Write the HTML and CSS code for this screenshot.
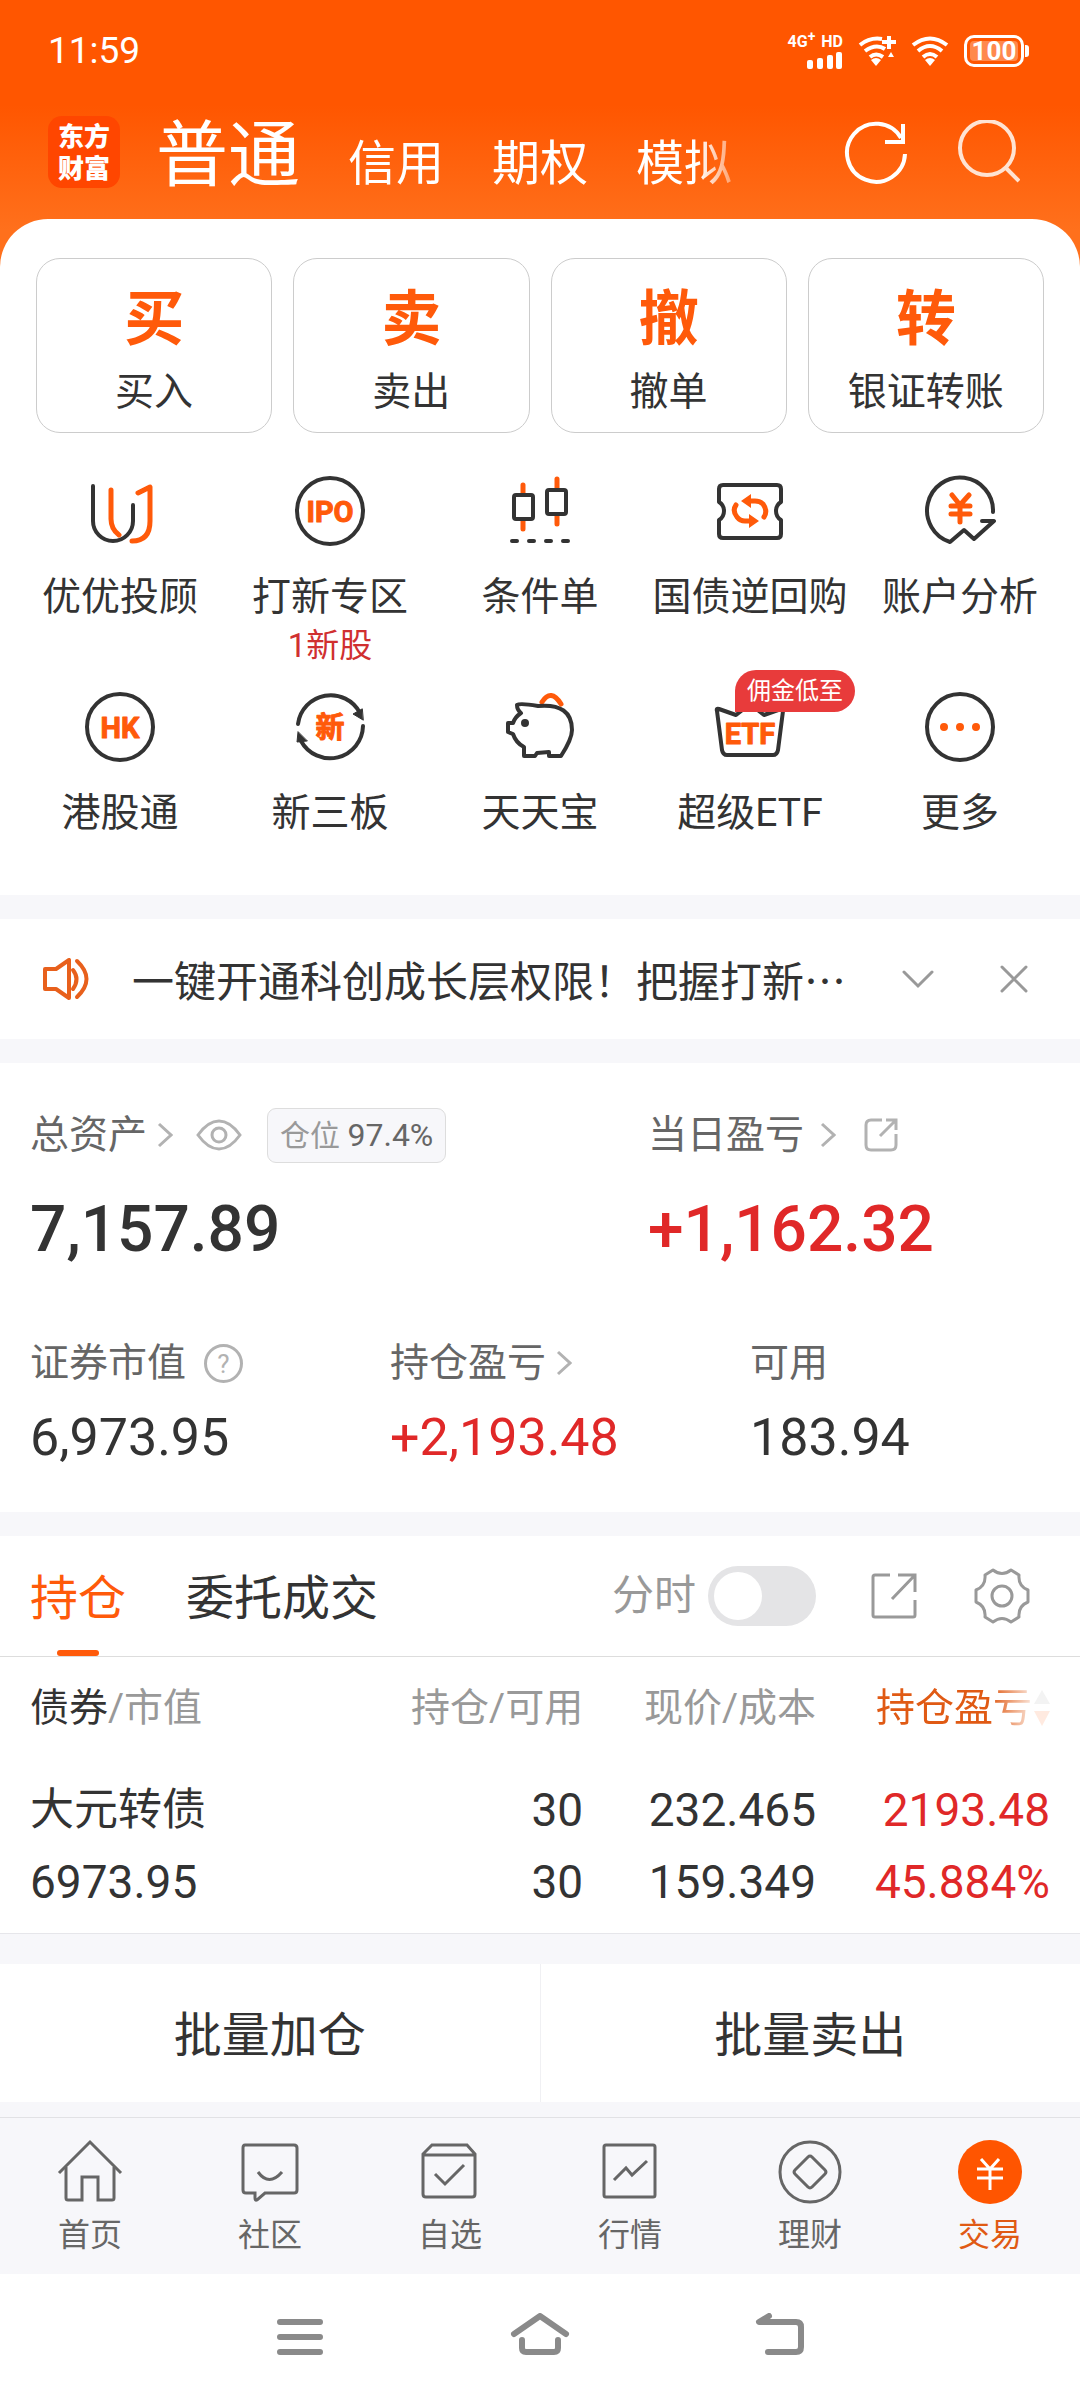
FILE: index.html
```html
<!DOCTYPE html>
<html lang="zh-CN">
<head>
  <meta charset="UTF-8" />
  <meta name="viewport" content="width=device-width, initial-scale=1.0" />
  <title>东方财富 - 交易</title>
  <link rel="stylesheet" href="styles.css">
</head>
<body>
  <div class="top">
    <div class="status-bar">
      <span class="time">11:59</span>
      <div class="signal">
        <div class="signal-text"><span>4G<sup>+</sup></span><span>HD</span></div>
        <svg width="36" height="17" viewBox="0 0 36 17" fill="#fff">
          <rect x="0" y="8" width="6" height="9" rx="2" />
          <rect x="10" y="6" width="6" height="11" rx="2" />
          <rect x="20" y="3" width="6" height="14" rx="2" />
          <rect x="29" y="0" width="6" height="17" rx="2" />
        </svg>
      </div>
      <svg width="38" height="32" viewBox="0 0 38 32" fill="none" stroke="#fff" stroke-width="4">
        <path d="M2 10Q12 2 24 4M7 16Q18 8 27 14M12 22Q18 17 25 22" />
        <path d="M31 1V14M24 7H38" />
        <path d="M13 25Q18 21 23 25L18 31Z" fill="#fff" stroke="none" />
        <path d="M30 22L33 17L36 22Z" fill="#fff" stroke="none" />
      </svg>
      <svg width="38" height="32" viewBox="0 0 38 32" fill="none" stroke="#fff" stroke-width="4">
        <path d="M2 10Q19 -3 36 10M7 16Q19 6 31 16M12 22Q19 16 26 22" />
        <path d="M14 25Q19 21 24 25L19 31Z" fill="#fff" stroke="none" />
      </svg>
      <div class="battery"><span>100</span></div>
    </div>

    <header class="title-bar">
      <div class="logo"><span>东方</span><span>财富</span></div>
      <nav class="account-tabs">
        <button class="active">普通</button>
        <button>信用</button>
        <button>期权</button>
        <button>模拟</button>
      </nav>
      <button class="icon-btn" aria-label="刷新">
        <svg width="64" height="64" viewBox="0 0 64 64" fill="none" stroke="#fff" stroke-width="4">
          <path d="M61 34A29 29 0 1 1 57 18" />
          <path d="M59 4V22H41" />
        </svg>
      </button>
      <button class="icon-btn" aria-label="搜索">
        <svg width="64" height="64" viewBox="0 0 64 64" fill="none" stroke="#ffe3d2" stroke-width="4">
          <circle cx="31" cy="28" r="27" />
          <path d="M49 47L63 61" />
        </svg>
      </button>
    </header>

    <section class="panel">
      <div class="actions">
        <button><b>买</b>买入</button>
        <button><b>卖</b>卖出</button>
        <button><b>撤</b>撤单</button>
        <button><b>转</b>银证转账</button>
      </div>

      <div class="services">
        <a href="#">
          <svg class="service-icon" viewBox="0 0 80 80">
            <path d="M13 15V50a20 20 0 0 0 40 0V34" />
            <path class="accent" d="M31 19V48Q31 58 39 64M58 22L70 16V50Q70 70 52 70" />
          </svg>
          优优投顾
        </a>
        <a href="#">
          <svg class="service-icon" viewBox="0 0 80 80">
            <circle cx="40" cy="40" r="33" />
            <text x="40" y="51">IPO</text>
          </svg>
          打新专区
          <small>1新股</small>
        </a>
        <a href="#">
          <svg class="service-icon" viewBox="0 0 80 80">
            <path class="accent" d="M23 14V22M23 50V58M57 8V17M57 44V53" />
            <rect x="14" y="24" width="19" height="24" rx="2" />
            <rect x="47" y="19" width="19" height="24" rx="2" />
            <path d="M12 70H17M29 70H34M46 70H51M63 70H68" />
          </svg>
          条件单
        </a>
        <a href="#">
          <svg class="service-icon" viewBox="0 0 80 80">
            <path d="M13 14H67Q71 14 71 18V31Q66 34 66 40T71 49V63Q71 67 67 67H13Q9 67 9 63V49Q14 46 14 40T9 31V18Q9 14 13 14Z" />
            <path class="accent" d="M54 46Q58 40 53 33Q50 30 45 30H40M26 34Q22 40 27 46Q30 50 35 50H40" />
            <path class="fill" d="M31 30L41 23V37ZM49 50L39 43V57Z" />
          </svg>
          国债逆回购
        </a>
        <a href="#">
          <svg class="service-icon" viewBox="0 0 80 80">
            <path d="M73 41A33 33 0 1 0 30 71L44 59L54 68L74 50H62" />
            <path class="accent" d="M32 24L40 34L49 24M40 34V51M31 35H50M31 43H50" />
          </svg>
          账户分析
        </a>
        <a href="#">
          <svg class="service-icon" viewBox="0 0 80 80">
            <circle cx="40" cy="40" r="33" />
            <text x="40" y="51">HK</text>
          </svg>
          港股通
        </a>
        <a href="#">
          <svg class="service-icon" viewBox="0 0 80 80">
            <path d="M8 37A33 33 0 0 1 70 26M73 39A33 33 0 0 1 11 54" />
            <path class="arrow" d="M73 33L63 27L72 22ZM8 45L7 55L17 54Z" />
            <text x="40" y="51">新</text>
          </svg>
          新三板
        </a>
        <a href="#">
          <svg class="service-icon" viewBox="0 0 80 80">
            <path class="accent" d="M42 15Q51 1 61 17" />
            <path d="M17 18Q20 16 38 19Q72 16 72 43Q72 52 61 69H49V65L37 66L35 69H24V60Q16 56 13 47L8 45V36H13Q15 30 21 26Q17 23 17 18Z" />
            <circle class="dark" cx="25" cy="36" r="2" />
          </svg>
          天天宝
        </a>
        <a href="#">
          <svg class="service-icon" viewBox="0 0 80 80">
            <path d="M9 22L26 28L40 17L54 28L71 22Q74 21 73 24L68 63Q67 68 63 68H17Q13 68 12 63L7 24Q6 21 9 22Z" />
            <text x="40" y="57">ETF</text>
          </svg>
          超级ETF
          <span class="badge">佣金低至</span>
        </a>
        <a href="#">
          <svg class="service-icon" viewBox="0 0 80 80">
            <circle cx="40" cy="40" r="33" />
            <path class="fill" d="M28 40a4 4 0 1 1-8 0a4 4 0 1 1 8 0M44 40a4 4 0 1 1-8 0a4 4 0 1 1 8 0M60 40a4 4 0 1 1-8 0a4 4 0 1 1 8 0" />
          </svg>
          更多
        </a>
      </div>
    </section>
  </div>

  <section class="notice">
    <svg width="48" height="42" viewBox="0 0 48 42" fill="none" stroke="#e8601c" stroke-width="4" stroke-linejoin="round" stroke-linecap="round">
      <path d="M3 11H14L27 2V40L14 31H3Z" />
      <path d="M31 12Q38 21 31 31M35 3Q54 21 35 39" />
    </svg>
    <p>一键开通科创成长层权限！把握打新…</p>
    <button class="icon-btn" aria-label="展开">
      <svg width="32" height="32" viewBox="0 0 32 32" fill="none" stroke="#999" stroke-width="3" stroke-linecap="round">
        <path d="M2 9L16 23L30 9" />
      </svg>
    </button>
    <button class="icon-btn" aria-label="关闭">
      <svg width="32" height="32" viewBox="0 0 32 32" fill="none" stroke="#999" stroke-width="3" stroke-linecap="round">
        <path d="M4 4L28 28M28 4L4 28" />
      </svg>
    </button>
  </section>

  <section class="assets">
    <div class="asset-main">
      <div>
        <div class="label">
          <span>总资产</span>
          <svg class="chevron" viewBox="0 0 16 26"><path d="M2 2L14 13L2 24" /></svg>
          <button class="icon-btn eye" aria-label="隐藏资产">
            <svg width="46" height="32" viewBox="0 0 46 32" fill="none" stroke="#b2b2b2" stroke-width="3">
              <path d="M2 16Q12 2 23 2T44 16Q34 30 23 30T2 16Z" />
              <circle cx="23" cy="16" r="7" />
            </svg>
          </button>
          <span class="position">仓位 <em>97.4%</em></span>
        </div>
        <div class="big">7,157.89</div>
      </div>
      <div>
        <div class="label">
          <span>当日盈亏</span>
          <svg class="chevron wide" viewBox="0 0 16 26"><path d="M2 2L14 13L2 24" /></svg>
          <button class="icon-btn share" aria-label="分享">
            <svg width="34" height="34" viewBox="0 0 34 34" fill="none" stroke="#b2b2b2" stroke-width="3">
              <path d="M18 2H7Q2 2 2 7V27Q2 32 7 32H27Q32 32 32 27V16" />
              <path d="M22 2H32V12M32 2L16 18" />
            </svg>
          </button>
        </div>
        <div class="big up">+1,162.32</div>
      </div>
    </div>
    <div class="asset-sub">
      <div>
        <div class="label">
          <span>证券市值</span>
          <span class="help">?</span>
        </div>
        <div class="value">6,973.95</div>
      </div>
      <div>
        <div class="label">
          <span>持仓盈亏</span>
          <svg class="chevron" viewBox="0 0 16 26"><path d="M2 2L14 13L2 24" /></svg>
        </div>
        <div class="value up">+2,193.48</div>
      </div>
      <div>
        <div class="label"><span>可用</span></div>
        <div class="value">183.94</div>
      </div>
    </div>
  </section>

  <section class="holdings">
    <div class="holding-tabs">
      <button class="tab active">持仓</button>
      <button class="tab">委托成交</button>
      <label class="switch" for="minute">分时 <input type="checkbox" id="minute"></label>
      <button class="icon-btn" aria-label="分享持仓">
        <svg width="48" height="48" viewBox="0 0 48 48" fill="none" stroke="#999" stroke-width="3">
          <path d="M20 3H5Q3 3 3 5V43Q3 45 5 45H43Q45 45 45 43V28" />
          <path d="M28 3H45V20M45 3L22 27" />
        </svg>
      </button>
      <button class="icon-btn" aria-label="设置">
        <svg width="56" height="56" viewBox="0 0 56 56" fill="none" stroke="#999" stroke-width="3" stroke-linejoin="round">
          <path d="M19 2Q28 9 37 2L45 7Q44 18 54 22V34Q44 38 45 49L37 54Q28 47 19 54L11 49Q12 38 2 34V22Q12 18 11 7Z" />
          <circle cx="28" cy="28" r="10" />
        </svg>
      </button>
    </div>

    <table>
      <thead>
        <tr>
          <th><b>债券</b>/市值</th>
          <th>持仓/可用</th>
          <th>现价/成本</th>
          <th>
            <span class="sorted">持仓盈亏<svg width="16" height="36" viewBox="0 0 16 36"><path d="M8 0L16 14H0Z" fill="#999" /><path d="M0 21H16L8 36Z" fill="#ff5500" /></svg></span>
          </th>
        </tr>
      </thead>
      <tbody>
        <tr>
          <td><span class="name">大元转债</span><br>6973.95</td>
          <td>30<br>30</td>
          <td>232.465<br>159.349</td>
          <td class="up">2193.48<br>45.884%</td>
        </tr>
      </tbody>
    </table>
  </section>

  <div class="batch">
    <button>批量加仓</button>
    <button>批量卖出</button>
  </div>

  <nav class="tab-bar">
    <a href="#">
      <svg viewBox="0 0 66 66">
        <path d="M2 34L33 3L64 34" />
        <path d="M9 28V59Q9 61 11 61H25V38H41V61H55Q57 61 57 59V28" />
      </svg>
      首页
    </a>
    <a href="#">
      <svg viewBox="0 0 66 66">
        <path d="M8 6H57Q60 6 60 9V51Q60 54 57 54H28L20 61Q18 62 18 59V54H9Q6 54 6 51V9Q6 6 8 6Z" />
        <path d="M21 33Q32 48 45 33" />
      </svg>
      社区
    </a>
    <a href="#">
      <svg viewBox="0 0 66 66">
        <path d="M6 15V55Q6 58 9 58H55Q58 58 58 55V15L50 6H15ZM6 16H58" />
        <path d="M18 35L28 45L47 26" />
      </svg>
      自选
    </a>
    <a href="#">
      <svg viewBox="0 0 66 66">
        <rect x="7" y="6" width="51" height="52" rx="2" />
        <path d="M17 41L29 29L35 36L50 22" />
      </svg>
      行情
    </a>
    <a href="#">
      <svg viewBox="0 0 66 66">
        <circle cx="33" cy="33" r="30" />
        <path d="M31 18Q33 16 35 18L48 31Q50 33 48 35L35 48Q33 50 31 48L18 35Q16 33 18 31Z" />
      </svg>
      理财
    </a>
    <a href="#" class="active">
      <svg viewBox="0 0 66 66">
        <circle class="coin" cx="33" cy="33" r="32" />
        <path class="yen" d="M24 20L33 30L42 20M33 30V51M20 30H46M20 39H46" />
      </svg>
      交易
    </a>
  </nav>

  <div class="system-nav">
    <button class="icon-btn" aria-label="最近任务">
      <svg viewBox="0 0 60 48"><path d="M10 9H50M10 24H50M10 39H50" /></svg>
    </button>
    <button class="icon-btn" aria-label="主屏幕">
      <svg viewBox="0 0 60 48"><path d="M4 21L30 3L56 21M12 27V35Q12 39 16 39H44Q48 39 48 35V27" /></svg>
    </button>
    <button class="icon-btn" aria-label="返回">
      <svg viewBox="0 0 60 48"><path d="M19 3L9 9H46Q51 9 51 14V34Q51 39 46 39H18" /></svg>
    </button>
  </div>
</body>
</html>
```
FILE: styles.css
```css
* {
  box-sizing: border-box;
}
body {
  margin: 0;
  background: #f7f7fa;
  color: #333;
  font-family: Roboto, "Noto Sans CJK SC", sans-serif;
  font-size: 39px;
  line-height: 40px;
}
button {
  padding: 0;
  border: none;
  background: none;
  color: inherit;
  font: inherit;
  cursor: pointer;
}
a {
  color: inherit;
  text-decoration: none;
}
svg {
  display: block;
}
.up {
  color: #e02828;
}

/* header */
.top {
  background: linear-gradient(#ff5600 105px, #ff701c 230px);
}
.status-bar {
  display: flex;
  align-items: center;
  gap: 15px;
  height: 102px;
  padding: 0 51px 0 48px;
  color: #fff;
}
.time {
  flex: 1;
  font-size: 37px;
}
.signal {
  display: flex;
  flex-direction: column;
  align-items: flex-end;
  gap: 2px;
}
.signal-text {
  display: flex;
  gap: 6px;
  font-size: 16px;
  font-weight: 700;
  line-height: 16px;
}
.signal-text sup {
  font-size: 14px;
  line-height: 0;
}
.battery {
  position: relative;
  padding: 3px;
  margin-right: 5px;
  border: 3px solid #fff;
  border-radius: 10px;
}
.battery::after {
  content: "";
  position: absolute;
  top: 7px;
  right: -8px;
  width: 4px;
  height: 12px;
  border-radius: 0 3px 3px 0;
  background: #fff;
}
.battery span {
  display: block;
  width: 48px;
  border-radius: 4px;
  background: rgba(255, 255, 255, 0.3);
  font-size: 26px;
  font-weight: 700;
  line-height: 20px;
  text-align: center;
}
.title-bar {
  display: flex;
  align-items: center;
  height: 117px;
  padding: 0 60px 18px 48px;
  color: #fff;
}
.logo {
  width: 72px;
  height: 72px;
  padding-top: 3px;
  border-radius: 14px;
  background: #ff4600;
  font-family: "Noto Sans CJK SC", sans-serif;
  font-size: 26px;
  font-weight: 900;
  line-height: 32px;
  text-align: center;
}
.logo span {
  display: block;
}
.account-tabs {
  display: flex;
  align-items: baseline;
  gap: 48px;
  margin: 0 auto 0 36px;
  padding-top: 16px;
  font-size: 48px;
  line-height: 80px;
  white-space: nowrap;
  -webkit-mask-image: linear-gradient(to right, #000 calc(100% - 34px), rgba(0, 0, 0, 0.4));
  mask-image: linear-gradient(to right, #000 calc(100% - 34px), rgba(0, 0, 0, 0.4));
}
.account-tabs .active {
  font-size: 72px;
}
.title-bar .icon-btn + .icon-btn {
  margin-left: 48px;
}

/* quick actions */
.panel {
  padding: 39px 0 62px;
  border-radius: 48px 48px 0 0;
  background: #fff;
}
.actions {
  display: grid;
  grid-template-columns: repeat(4, 1fr);
  gap: 21px;
  padding: 0 36px;
}
.actions button {
  height: 175px;
  padding-top: 8px;
  border: 1px solid #ccc;
  border-radius: 24px;
}
.actions b {
  display: block;
  margin-bottom: 20px;
  color: #ff5a0a;
  font-size: 60px;
  line-height: 64px;
}
.services {
  display: grid;
  grid-template-columns: repeat(5, 1fr);
  row-gap: 21px;
  padding: 38px 15px 0;
}
.services a {
  position: relative;
  display: flex;
  flex-direction: column;
  align-items: center;
  white-space: nowrap;
}
.services small {
  margin-top: 9px;
  color: #d03030;
  font-size: 33px;
}
.service-icon {
  width: 80px;
  height: 80px;
  margin-bottom: 26px;
  fill: none;
  stroke: #333;
  stroke-width: 4;
  stroke-linecap: round;
  stroke-linejoin: round;
}
.service-icon .accent {
  stroke: #ff5a0a;
  stroke-width: 5;
}
.service-icon .fill {
  fill: #ff5a0a;
  stroke: none;
}
.service-icon .dark {
  fill: #333;
}
.service-icon .arrow {
  fill: #333;
  stroke-width: 1;
}
.service-icon text {
  fill: #ff5a0a;
  stroke: #ff5a0a;
  stroke-width: 1;
  font-size: 29px;
  font-weight: 700;
  text-anchor: middle;
}
.badge {
  position: absolute;
  top: -17px;
  left: 90px;
  padding: 0 12px;
  border-radius: 21px 21px 21px 0;
  background: #e83b3b;
  color: #fff;
  font-size: 24px;
  line-height: 42px;
}

/* notice */
.notice {
  display: flex;
  align-items: center;
  height: 120px;
  margin: 24px 0;
  padding: 0 50px 0 42px;
  background: #fff;
}
.notice p {
  flex: 1;
  margin: 0 0 0 42px;
  font-family: "Noto Sans CJK SC", sans-serif;
  font-size: 42px;
  white-space: nowrap;
}
.notice .icon-btn + .icon-btn {
  margin-left: 64px;
}

/* assets */
.assets {
  padding: 44px 30px 46px;
  background: #fff;
}
.asset-main {
  display: grid;
  grid-template-columns: 618fr 402fr;
}
.asset-sub {
  display: grid;
  grid-template-columns: 6fr 6fr 5fr;
  margin-top: 77px;
}
.label {
  display: flex;
  align-items: center;
  color: #666;
  white-space: nowrap;
}
.asset-main .label {
  height: 56px;
}
.chevron {
  width: 16px;
  height: 26px;
  margin-left: 10px;
  fill: none;
  stroke: #b2b2b2;
  stroke-width: 3;
}
.chevron.wide {
  margin-left: 16px;
}
.eye {
  margin-left: 23px;
}
.share {
  margin-left: 28px;
}
.position {
  margin-left: 25px;
  padding: 0 12px;
  border: 1px solid #ddd;
  border-radius: 9px;
  background: #f7f7fa;
  color: #999;
  font-size: 30px;
  line-height: 52px;
}
.position em {
  color: #666;
  font-size: 32px;
  font-style: normal;
}
.help {
  width: 39px;
  height: 39px;
  margin-left: 18px;
  border: 3px solid #b2b2b2;
  border-radius: 50%;
  color: #b2b2b2;
  font-size: 26px;
  line-height: 34px;
  text-align: center;
}
.big {
  margin-top: 31px;
  font-size: 64px;
  font-weight: 500;
  line-height: 72px;
}
.value {
  margin-top: 27px;
  font-size: 52px;
  line-height: 56px;
}

/* holdings */
.holdings {
  margin-top: 24px;
  border-bottom: 1px solid #e6e6ea;
  background: #fff;
}
.holding-tabs {
  display: flex;
  align-items: center;
  height: 121px;
  padding: 0 50px 0 30px;
  border-bottom: 1px solid #ddd;
  font-size: 48px;
}
.tab {
  position: relative;
  height: 120px;
  margin-right: 60px;
  padding-top: 6px;
}
.tab.active {
  color: #ff5a0a;
}
.tab.active::after {
  content: "";
  position: absolute;
  bottom: 0;
  left: 27px;
  width: 42px;
  height: 6px;
  border-radius: 3px;
  background: #ff5a0a;
}
.switch {
  display: flex;
  align-items: center;
  gap: 12px;
  margin: 0 54px 0 auto;
  color: #999;
  font-size: 42px;
}
.switch input {
  appearance: none;
  width: 108px;
  height: 60px;
  margin: 0;
  padding: 6px;
  border-radius: 30px;
  background: #e4e4e6;
}
.switch input::before {
  content: "";
  display: block;
  width: 48px;
  height: 48px;
  border-radius: 50%;
  background: #fff;
}
.switch input:checked {
  background: #ff5a0a;
}
.switch input:checked::before {
  margin-left: 48px;
}
.holding-tabs .icon-btn + .icon-btn {
  margin-left: 56px;
}
.holdings table {
  width: 100%;
  table-layout: fixed;
  border-collapse: collapse;
}
.holdings th {
  height: 98px;
  padding: 3px 0 0;
  color: #999;
  font-weight: 400;
  text-align: right;
  white-space: nowrap;
}
.holdings th b {
  color: #333;
  font-weight: 400;
}
.holdings td {
  padding: 18px 0 15px;
  font-size: 46px;
  line-height: 72px;
  text-align: right;
}
.holdings th:first-child,
.holdings td:first-child {
  padding-left: 30px;
  text-align: left;
}
.holdings th:last-child,
.holdings td:last-child {
  padding-right: 30px;
}
.holdings th:first-child {
  width: 32%;
}
.holdings th:nth-child(2) {
  width: 22%;
}
.holdings th:last-child {
  width: 264px;
}
.name {
  font-size: 44px;
}
.sorted {
  display: inline-flex;
  align-items: center;
  gap: 2px;
  color: #e05a14;
  -webkit-mask-image: linear-gradient(to right, #000 calc(100% - 60px), rgba(0, 0, 0, 0.12) calc(100% - 16px));
  mask-image: linear-gradient(to right, #000 calc(100% - 60px), rgba(0, 0, 0, 0.12) calc(100% - 16px));
}

/* batch buttons */
.batch {
  display: flex;
  margin: 30px 0 15px;
  background: #fff;
}
.batch button {
  flex: 1;
  height: 138px;
  padding-top: 6px;
  font-size: 48px;
}
.batch button + button {
  border-left: 1px solid #f0f0f3;
}

/* bottom navigation */
.tab-bar {
  display: grid;
  grid-template-columns: repeat(6, 1fr);
  height: 157px;
  padding-top: 21px;
  border-top: 1px solid #e2e2e5;
  color: #666;
  font-size: 32px;
}
.tab-bar a {
  display: flex;
  flex-direction: column;
  align-items: center;
  gap: 10px;
}
.tab-bar svg {
  width: 66px;
  height: 66px;
  fill: none;
  stroke: #666;
  stroke-width: 3;
}
.tab-bar .active {
  color: #e05a14;
}
.tab-bar .coin {
  fill: #ff5500;
  stroke: none;
}
.tab-bar .yen {
  stroke: #fff;
}
.system-nav {
  display: grid;
  grid-template-columns: repeat(3, 1fr);
  justify-items: center;
  height: 126px;
  padding: 0 180px;
  background: #fff;
}
.system-nav svg {
  width: 60px;
  height: 48px;
  fill: none;
  stroke: #8a8a8a;
  stroke-width: 6;
  stroke-linecap: round;
  stroke-linejoin: round;
}
```
